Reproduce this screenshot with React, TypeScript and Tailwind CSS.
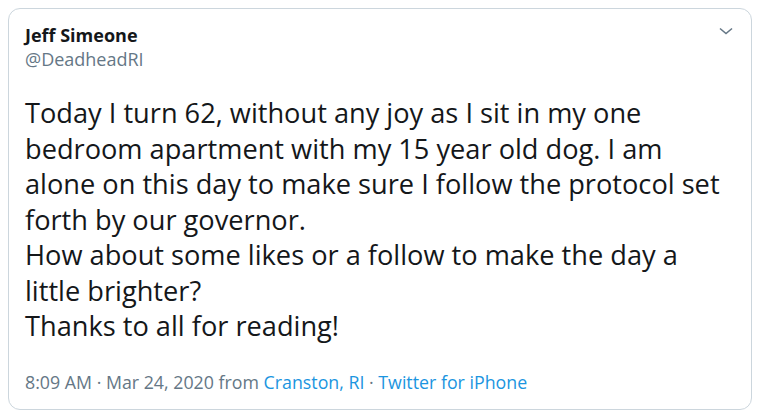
import React from "react";

const lines = [
  "Today I turn 62, without any joy as I sit in my one",
  "bedroom apartment with my 15 year old dog. I am",
  "alone on this day to make sure I follow the protocol set",
  "forth by our governor.",
  "How about some likes or a follow to make the day a",
  "little brighter?",
  "Thanks to all for reading!",
];

export default function App() {
  return (
    <div
      className="w-[760px] h-[418px] bg-white p-2"
      style={{ fontFamily: '"Open Sans", "Noto Sans", sans-serif' }}
    >
      <div className="h-full rounded-[12px] border border-[#ccd6dd] px-[16px] pt-[15px]">
        <div className="flex justify-between">
          <div>
            <div className="text-[18px] leading-[22px] font-bold text-[#14171a]">Jeff Simeone</div>
            <div className="text-[18px] leading-[22px] mt-[2px] text-[#657786]">@DeadheadRI</div>
          </div>
          <svg viewBox="0 0 14 8" className="w-[14px] h-[8px] mt-[3px] mr-[2px] text-[#657786]" fill="none" stroke="currentColor" strokeWidth="1.6">
            <path d="M1 1.5L7 6.5L13 1.5" />
          </svg>
        </div>
        <div className="mt-[25px] text-[27.2px] leading-[35.5px] text-[#14171a] whitespace-nowrap">
          {lines.map((l, i) => (
            <div key={i}>{l}</div>
          ))}
        </div>
        <div className="mt-[27px] text-[17.8px] leading-[22px] text-[#657786] whitespace-nowrap">
          8:09 AM · Mar 24, 2020 from <span className="text-[#1b95e0]">Cranston, RI</span> ·{" "}
          <span className="text-[#1b95e0]">Twitter for iPhone</span>
        </div>
      </div>
    </div>
  );
}
